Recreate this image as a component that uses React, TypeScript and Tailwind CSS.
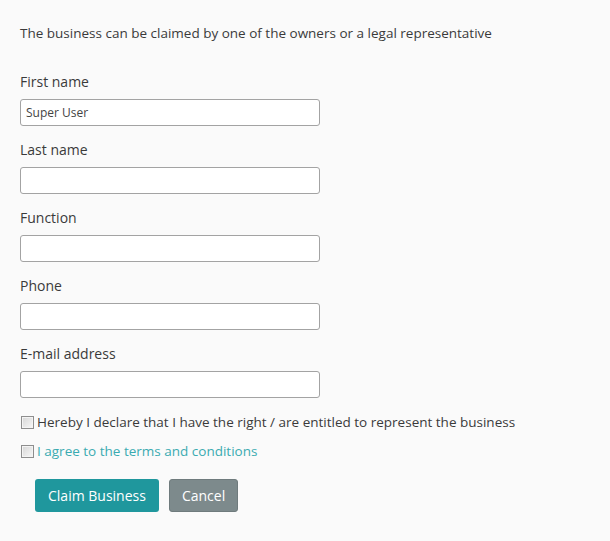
import React from "react";

const fields = [
  { label: "First name", value: "Super User" },
  { label: "Last name", value: "" },
  { label: "Function", value: "" },
  { label: "Phone", value: "" },
  { label: "E-mail address", value: "" },
];

function Box() {
  return (
    <span className="inline-block w-[13px] h-[13px] shrink-0 border border-[#8e8e8e] bg-gradient-to-br from-[#d6d6d6] to-[#f8f8f8] shadow-[inset_0_0_0_1px_#f4f4f4]" />
  );
}

export default function App() {
  return (
    <div
      className="min-h-screen bg-[#fafafa] pl-5 pt-[24px] text-[#3a3a3a]"
      style={{ fontFamily: '"Open Sans", "Noto Sans", sans-serif' }}
    >
      <p className="text-[13.5px] leading-[18px] m-0">
        The business can be claimed by one of the owners or a legal representative
      </p>
      <div className="flex flex-col mt-[30px]">
        {fields.map((f, i) => (
          <div key={f.label} className={i === 0 ? "flex flex-col" : "flex flex-col mt-[14px]"}>
            <label className="text-[14px] leading-[20px]">{f.label}</label>
            <input
              readOnly
              value={f.value}
              className="mt-[7px] w-[300px] h-[27px] rounded-[3px] border border-[#a3a3a3] bg-white px-[5px] text-[12px] text-[#444] outline-none"
              style={{ fontFamily: '"Open Sans", "Noto Sans", sans-serif' }}
            />
          </div>
        ))}
      </div>
      <div className="mt-[14px] flex items-center gap-[3px] pl-[1px] text-[13.5px] leading-[20px]">
        <Box />
        <span>Hereby I declare that I have the right / are entitled to represent the business</span>
      </div>
      <div className="mt-[9px] flex items-center gap-[3px] pl-[1px] text-[13.5px] leading-[20px]">
        <Box />
        <span className="text-[#3aabb1]">I agree to the terms and conditions</span>
      </div>
      <div className="mt-[18px] ml-[15px] flex gap-[10px]">
        <button className="h-[33px] px-[13px] rounded-[3px] bg-[#1f979d] text-white text-[14px]">
          Claim Business
        </button>
        <button className="h-[33px] px-[12px] rounded-[3px] bg-[#7d8a8c] border border-[#6f7b7d] text-white text-[14px]">
          Cancel
        </button>
      </div>
    </div>
  );
}
